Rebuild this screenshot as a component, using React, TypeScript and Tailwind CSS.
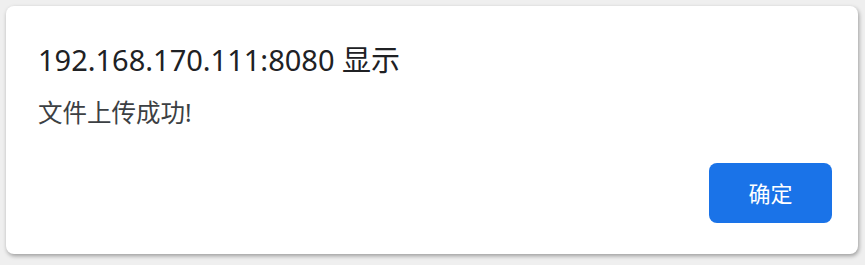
const App = () => {
  return (
    <div className="h-[265px] w-[865px] bg-[#efefef] pt-[6px] pl-[6px]">
      <div
        className="flex h-[248px] w-[852px] flex-col rounded-[8px] bg-white pl-[32px] pr-[26px] pt-[36px] shadow-[1px_2px_4px_rgba(0,0,0,0.35)]"
        style={{ fontFamily: '"Noto Sans", "Noto Sans CJK SC", sans-serif' }}
      >
        <h1 className="text-[29px] leading-[36px] text-[#202124]">192.168.170.111:8080 显示</h1>
        <p className="mt-[20px] text-[24.5px] leading-[30px] text-[#3c4043]">文件上传成功!</p>
        <div className="mt-auto mb-[31px] flex justify-end">
          <button className="h-[60px] w-[123px] rounded-[8px] bg-[#1a73e8] text-[22px] text-white">
            确定
          </button>
        </div>
      </div>
    </div>
  );
};

export default App;
